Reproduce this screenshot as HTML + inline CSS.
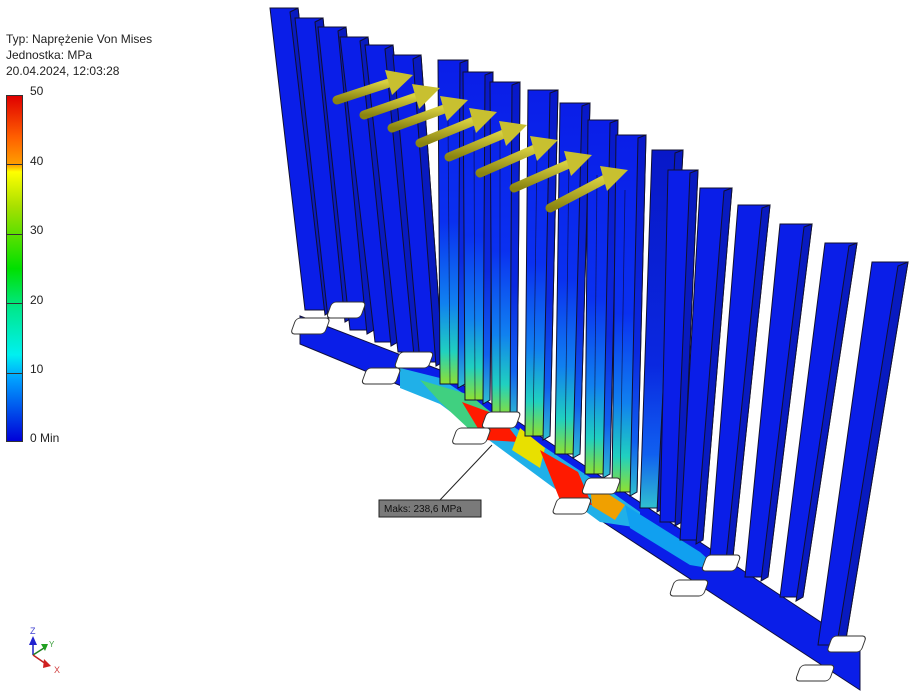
<!DOCTYPE html>
<html><head><meta charset="utf-8"><style>
html,body{margin:0;padding:0;background:#fff;width:917px;height:699px;overflow:hidden;font-family:"Liberation Sans",sans-serif}
.t{position:absolute;left:6px;font-size:12px;color:#222;line-height:16px}
.n{position:absolute;left:30px;font-size:12px;color:#222}
</style></head><body>
<div class="t" style="top:31px">Typ: Naprężenie Von Mises<br>Jednostka: MPa<br>20.04.2024, 12:03:28</div>
<div style="position:absolute;left:6px;top:95px;width:17px;height:347px;border:1px solid #333;box-sizing:border-box;background:linear-gradient(to bottom,#e00000 0%,#ff6000 12%,#ffa000 20%,#ffff00 22%,#a8e000 32%,#00e000 50%,#00e890 62%,#00f0f0 75%,#00a0ff 82%,#0000d8 100%)"></div>
<div style="position:absolute;left:6px;top:164px;width:17px;height:1px;background:#333"></div>
<div style="position:absolute;left:6px;top:234px;width:17px;height:1px;background:#333"></div>
<div style="position:absolute;left:6px;top:303px;width:17px;height:1px;background:#333"></div>
<div style="position:absolute;left:6px;top:373px;width:17px;height:1px;background:#333"></div>
<div class="n" style="top:84px">50</div>
<div class="n" style="top:154px">40</div>
<div class="n" style="top:223px">30</div>
<div class="n" style="top:293px">20</div>
<div class="n" style="top:362px">10</div>
<div class="n" style="top:431px">0 Min</div>
<svg width="917" height="699" style="position:absolute;left:0;top:0">
<defs>
<linearGradient id="mg" x1="0" y1="0" x2="0" y2="1"><stop offset="0" stop-color="#0a1ee8"/><stop offset="0.5" stop-color="#0a30f0"/><stop offset="0.75" stop-color="#1080f0"/><stop offset="0.9" stop-color="#20d0c0"/><stop offset="1" stop-color="#90e030"/></linearGradient>
<linearGradient id="mg2" x1="0" y1="0" x2="0" y2="1"><stop offset="0" stop-color="#0818c8"/><stop offset="0.6" stop-color="#0a28e0"/><stop offset="0.85" stop-color="#1060f0"/><stop offset="1" stop-color="#30c0d0"/></linearGradient>
<linearGradient id="ar" x1="0" y1="0" x2="0" y2="1"><stop offset="0" stop-color="#d8d040"/><stop offset="1" stop-color="#8a8410"/></linearGradient>
</defs>
<g stroke="#101040" stroke-width="1">
<polygon points="300,316 440,370 600,476 860,648 860,690 600,520 440,402 300,344" fill="#0a1ee8"/>
<polygon points="400,368 440,378 600,484 640,512 640,528 600,522 440,404 400,388" fill="#20b0e8" stroke="none"/>
<polygon points="420,380 470,395 500,420 470,430 440,402" fill="#40d080" stroke="none"/>
<polygon points="462,402 500,416 520,442 485,440" fill="#ff1a00" stroke="none"/>
<polygon points="520,428 545,448 540,468 512,450" fill="#e8e000" stroke="none"/>
<polygon points="540,450 578,472 592,505 560,500" fill="#ff1a00" stroke="none"/>
<polygon points="590,482 625,505 615,520 592,506" fill="#f0a000" stroke="none"/>
<polygon points="625,505 700,552 720,570 690,565 630,528" fill="#10a0f0" stroke="none"/>
</g>
<g stroke="#101030" stroke-width="1">
<polygon points="270,8 298,8 333,310 305,310" fill="#0a1ee8"/><polygon points="290,12 298,8 333,310 325,315" fill="#081ac0"/>
<polygon points="295,18 323,18 352,318 328,318" fill="#0a1ee8"/><polygon points="315,22 323,18 352,318 345,322" fill="#081ac0"/>
<polygon points="318,27 346,27 374,330 350,330" fill="#0a1ee8"/><polygon points="338,31 346,27 374,330 367,334" fill="#081ac0"/>
<polygon points="340,37 368,37 398,342 375,342" fill="#0a1ee8"/><polygon points="360,41 368,37 398,342 391,346" fill="#081ac0"/>
<polygon points="365,45 393,45 421,352 398,352" fill="#0a1ee8"/><polygon points="385,49 393,45 421,352 414,356" fill="#081ac0"/>
<polygon points="393,55 421,55 443,362 420,362" fill="#0a1ee8"/><polygon points="413,59 421,55 443,362 436,366" fill="#081ac0"/>
<polygon points="438,60 468,60 465,384 440,384" fill="url(#mg)"/><polygon points="460,63 468,60 465,384 458,388" fill="url(#mg2)"/>
<polygon points="463,72 493,72 490,400 465,400" fill="url(#mg)"/><polygon points="485,75 493,72 490,400 483,404" fill="url(#mg2)"/>
<polygon points="490,82 520,82 517,418 492,418" fill="url(#mg)"/><polygon points="512,85 520,82 517,418 510,422" fill="url(#mg2)"/>
<polygon points="528,90 558,90 550,436 525,436" fill="url(#mg)"/><polygon points="550,93 558,90 550,436 543,440" fill="url(#mg2)"/>
<polygon points="560,103 590,103 580,454 555,454" fill="url(#mg)"/><polygon points="582,106 590,103 580,454 573,458" fill="url(#mg2)"/>
<polygon points="588,120 618,120 610,474 585,474" fill="url(#mg)"/><polygon points="610,123 618,120 610,474 603,478" fill="url(#mg2)"/>
<polygon points="616,135 646,135 637,492 612,492" fill="url(#mg)"/><polygon points="638,138 646,135 637,492 630,496" fill="url(#mg2)"/>
<polygon points="652,150 683,150 664,508 640,508" fill="url(#mg2)"/><polygon points="675,153 683,150 664,508 657,512" fill="#081ac0"/>
<polygon points="668,170 698,170 682,522 660,522" fill="#0a1ee8"/><polygon points="690,173 698,170 682,522 675,526" fill="#081ac0"/>
<polygon points="700,188 732,188 703,540 680,540" fill="#0a1ee8"/><polygon points="724,191 732,188 703,540 696,544" fill="#081ac0"/>
<polygon points="738,205 770,205 733,557 710,557" fill="#0a1ee8"/><polygon points="762,208 770,205 733,557 726,561" fill="#081ac0"/>
<polygon points="780,224 812,224 768,577 745,577" fill="#0a1ee8"/><polygon points="804,227 812,224 768,577 761,581" fill="#081ac0"/>
<polygon points="825,243 857,243 803,597 780,597" fill="#0a1ee8"/><polygon points="849,246 857,243 803,597 796,601" fill="#081ac0"/>
<polygon points="872,262 908,262 845,645 818,645" fill="#0a1ee8"/><polygon points="898,266 908,262 845,645 836,650" fill="#081ac0"/>
</g>
<g stroke="#0a0a30" stroke-width="0.8" opacity="0.7">
<line x1="448" y1="120" x2="450" y2="384"/><line x1="474" y1="130" x2="475" y2="400"/><line x1="500" y1="140" x2="500" y2="418"/>
<line x1="537" y1="150" x2="533" y2="436"/><line x1="569" y1="160" x2="565" y2="454"/><line x1="597" y1="175" x2="594" y2="474"/><line x1="625" y1="190" x2="620" y2="492"/>
</g>
<g fill="#fff" stroke="#333" stroke-width="1">
<rect x="296" y="318" width="34" height="16" rx="4" transform="skewX(-20) translate(116,0)"/>
<rect x="330" y="302" width="34" height="16" rx="4" transform="skewX(-20) translate(112,0)"/>
<rect x="365" y="368" width="34" height="16" rx="4" transform="skewX(-20) translate(136,0)"/>
<rect x="398" y="352" width="34" height="16" rx="4" transform="skewX(-20) translate(130,0)"/>
<rect x="455" y="428" width="34" height="16" rx="4" transform="skewX(-20) translate(158,0)"/>
<rect x="485" y="412" width="34" height="16" rx="4" transform="skewX(-20) translate(152,0)"/>
<rect x="555" y="498" width="34" height="16" rx="4" transform="skewX(-20) translate(184,0)"/>
<rect x="585" y="478" width="34" height="16" rx="4" transform="skewX(-20) translate(176,0)"/>
<rect x="672" y="580" width="34" height="16" rx="4" transform="skewX(-20) translate(214,0)"/>
<rect x="703" y="555" width="34" height="16" rx="4" transform="skewX(-20) translate(206,0)"/>
<rect x="797" y="665" width="34" height="16" rx="4" transform="skewX(-20) translate(246,0)"/>
<rect x="828" y="636" width="34" height="16" rx="4" transform="skewX(-20) translate(236,0)"/>
</g>
<g stroke="url(#ar)" stroke-width="9" stroke-linecap="round" fill="#c8c030">
<line x1="337" y1="100" x2="392" y2="82"/><polygon points="385,70 413,75 392,95" stroke="none"/>
<line x1="364" y1="115" x2="419" y2="96"/><polygon points="412,84 440,88 419,109" stroke="none"/>
<line x1="392" y1="128" x2="447" y2="108"/><polygon points="440,96 468,100 447,121" stroke="none"/>
<line x1="420" y1="143" x2="476" y2="120"/><polygon points="469,108 497,112 476,133" stroke="none"/>
<line x1="449" y1="157" x2="506" y2="133"/><polygon points="499,121 527,125 506,146" stroke="none"/>
<line x1="480" y1="173" x2="537" y2="148"/><polygon points="530,136 558,140 537,161" stroke="none"/>
<line x1="514" y1="188" x2="571" y2="163"/><polygon points="564,151 592,155 571,176" stroke="none"/>
<line x1="550" y1="208" x2="607" y2="178"/><polygon points="600,166 628,170 607,191" stroke="none"/>
</g>
<line x1="440" y1="500" x2="492" y2="445" stroke="#222" stroke-width="1"/>
<rect x="379" y="500" width="102" height="17" fill="#7a7a7a" stroke="#222"/>
<text x="384" y="512" font-size="10" fill="#111" font-family="Liberation Sans,sans-serif">Maks: 238,6 MPa</text>
<g stroke-width="1.5">
<line x1="33" y1="655" x2="33" y2="640" stroke="#2020c0"/><polygon points="29,645 37,645 33,636" fill="#2020d0"/>
<line x1="33" y1="655" x2="44" y2="648" stroke="#208020"/><polygon points="41,644 48,644 45,651" fill="#20a020"/>
<line x1="33" y1="655" x2="46" y2="664" stroke="#c02020"/><polygon points="44,659 51,666 43,668" fill="#d02020"/>
</g>
<text x="30" y="634" font-size="9" fill="#4040d0" font-family="Liberation Sans,sans-serif">Z</text>
<text x="49" y="647" font-size="8" fill="#40a040" font-family="Liberation Sans,sans-serif">Y</text>
<text x="54" y="673" font-size="9" fill="#d04040" font-family="Liberation Sans,sans-serif">X</text>
</svg>
</body></html>
